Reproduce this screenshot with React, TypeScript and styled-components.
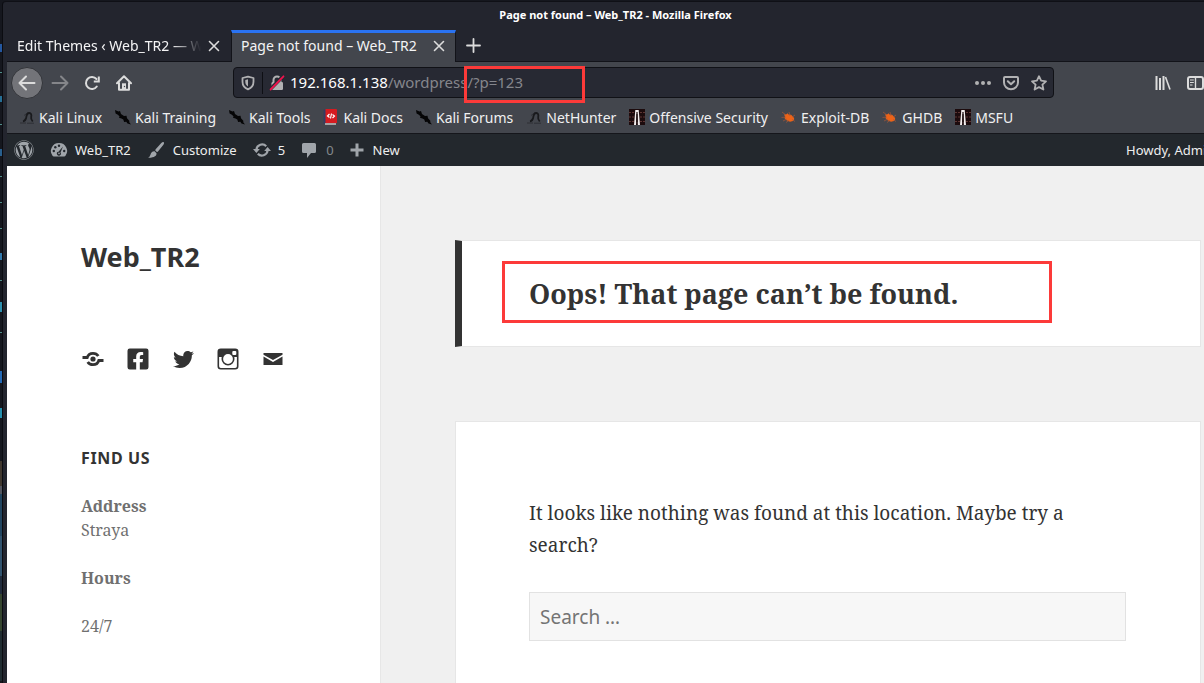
import React from "react";
import styled, { createGlobalStyle } from "styled-components";
import { FaFacebookSquare, FaTwitter, FaWordpress } from "react-icons/fa";

const sans = `"Noto Sans", "Open Sans", sans-serif`;
const serif = `"Noto Serif", "DejaVu Serif Condensed", "DejaVu Serif", serif`;

const GlobalStyle = createGlobalStyle`
  * { box-sizing: border-box; }
  body { margin: 0; background: #1a1c24; font-family: ${sans}; overflow: hidden; }
  button, input { font: inherit; color: inherit; margin: 0; padding: 0; border: 0; background: none; }
  a { color: inherit; text-decoration: none; }
  h1, h2, p { margin: 0; }
  svg { display: block; flex: none; }
`;

const Desktop = styled.div`
  display: flex;
  height: 100vh;
  padding-top: 1px;
  overflow: hidden;
  background: #15171e;
`;

const DesktopEdge = styled.svg`
  width: 2px;
  height: 100%;
`;

const Window = styled.div`
  flex: 1;
  min-width: 0;
  display: flex;
  flex-direction: column;
  padding-left: 4px;
  border-left: 1px solid #0b0c11;
  border-top: 1px solid #0f1016;
  border-top-left-radius: 4px;
  background: #23252e;
`;

const TitleBar = styled.header`
  height: 28px;
  line-height: 26px;
  text-align: center;
  font-size: 11px;
  font-weight: 700;
  color: #fff;
  padding-left: 20px;
`;

const TabStrip = styled.nav`
  height: 32px;
  display: flex;
  align-items: stretch;
  border-bottom: 1px solid #121319;
`;

const Tab = styled.div<{ $active?: boolean }>`
  width: ${(p) => (p.$active ? 225 : 224)}px;
  height: ${(p) => (p.$active ? "32px" : "31px")};
  display: flex;
  align-items: center;
  padding: 0 7px 3px 9px;
  font-size: 14px;
  color: #f4f4f5;
  border-top: 3px solid ${(p) => (p.$active ? "#2a73f2" : "transparent")};
  border-left: 1px solid ${(p) => (p.$active ? "#121319" : "transparent")};
  border-right: 1px solid ${(p) => (p.$active ? "#121319" : "transparent")};
  background: ${(p) => (p.$active ? "#43464d" : "transparent")};
`;

const TabTitle = styled.span<{ $fade?: boolean }>`
  flex: 1;
  min-width: 0;
  overflow: hidden;
  white-space: nowrap;
  line-height: 24px;
  ${(p) => p.$fade && "mask-image: linear-gradient(to right, #000 82%, transparent 98%);"}
`;

const tones = { bright: "#dcdcdc", soft: "#b1b1b3", off: "#85868a" };

const IconButton = styled.button<{ $width: number; $tone?: keyof typeof tones }>`
  && { color: ${(p) => tones[p.$tone ?? "bright"]}; }
  width: ${(p) => p.$width}px;
  height: 30px;
  display: flex;
  align-items: center;
  justify-content: center;
  flex: none;
`;

const BackButton = styled(IconButton)`
  && {
    height: 32px;
    border-radius: 50%;
    border: 1px solid #33353a;
    background: #737479;
  }
`;

const TabButton = styled(IconButton)`
  height: 28px;
`;

const NavBar = styled.div`
  height: 41px;
  display: flex;
  align-items: center;
  padding-left: 4px;
  background: #43464d;
`;

const UrlBar = styled.div`
  flex: 1;
  height: 31px;
  display: flex;
  align-items: center;
  margin: 0 101px 0 92px;
  padding: 0 0 0 7px;
  border: 1px solid #101116;
  border-radius: 4px;
  background: #272933;
  color: #b1b1b3;
`;

const Divider = styled.span`
  width: 1px;
  height: 22px;
  margin: 0 6px 0 7px;
  background: #0e0f14;
`;

const Address = styled.div`
  flex: 1;
  padding-left: 5px;
  font-size: 15px;
  line-height: 29px;
  white-space: nowrap;
  color: #85868c;
  b { font-weight: 400; color: #fff; }
`;

const Query = styled.span`
  position: relative;
`;

const QueryMark = styled.span`
  position: absolute;
  left: -3px;
  top: -6px;
  width: 121px;
  height: 37px;
  border: 3px solid #fc3a39;
`;

const Clip = styled.div`
  width: 17px;
  margin-left: 16px;
  overflow: hidden;
  flex: none;
`;

const Bookmarks = styled.nav`
  height: 31px;
  display: flex;
  align-items: center;
  gap: 13px;
  padding: 0 0 2px 12px;
  font-size: 14px;
  white-space: nowrap;
  color: #f0f0f1;
  background: #43464d;
  border-bottom: 1px solid #15161b;
`;

const Bookmark = styled.a`
  display: flex;
  align-items: center;
  gap: 4px;
`;

const AdminBar = styled.nav`
  height: 32px;
  display: flex;
  align-items: center;
  padding-left: 7px;
  font-size: 13px;
  white-space: nowrap;
  color: #eee;
  background: #23282d;
`;

const AdminItem = styled.a<{ $gap?: number; $dim?: boolean }>`
  display: flex;
  align-items: center;
  gap: ${(p) => p.$gap ?? 7}px;
  margin-right: 16px;
  color: ${(p) => (p.$dim ? "#84888c" : "#eee")};
  svg { color: #a0a5aa; }
`;

const Howdy = styled.a`
  width: 78px;
  margin-left: auto;
  overflow: hidden;
`;

const Site = styled.div`
  flex: 1;
  min-height: 0;
  display: flex;
  background: #f0f0f0;
`;

const Sidebar = styled.aside`
  width: 374px;
  flex: none;
  padding: 74px 74px 0;
  background: #fff;
  border-right: 1px solid #e7e7e7;
  color: #333;
`;

const SiteTitle = styled.h1`
  font-size: 27px;
  line-height: 34px;
`;

const Social = styled.nav`
  display: flex;
  gap: 21px;
  margin-top: 73px;
  a {
    width: 24px;
    height: 24px;
    display: flex;
    align-items: center;
    justify-content: center;
  }
`;

const WidgetTitle = styled.h2`
  margin-top: 75px;
  font-size: 16px;
  line-height: 24px;
  letter-spacing: 0.04em;
  text-transform: uppercase;
`;

const WidgetText = styled.p`
  margin-top: 24px;
  font-family: ${serif};
  font-size: 16px;
  line-height: 24px;
  color: #707070;
`;

const Main = styled.main`
  flex: 1;
  min-width: 0;
  display: flex;
  flex-direction: column;
  gap: 74px;
  padding: 74px 3px 0 74px;
`;

const NoticeCard = styled.header`
  position: relative;
  padding: 37px 67px 36px;
  background: #fff;
  border: 1px solid #e6e6e6;
  border-left: 7px solid #333;
`;

const NoticeTitle = styled.h1`
  font-family: ${serif};
  font-size: 27px;
  line-height: 32px;
  color: #333;
`;

const NoticeMark = styled.span`
  position: absolute;
  left: 40px;
  top: 20px;
  width: 550px;
  height: 62px;
  border: 3px solid #fc3a39;
`;

const ContentCard = styled.section`
  flex: 1;
  padding: 75px 74px 0 73px;
  background: #fff;
  border: 1px solid #e6e6e6;
  border-bottom: 0;
`;

const Message = styled.p`
  font-family: ${serif};
  font-size: 19px;
  line-height: 32px;
  color: #333;
`;

const SearchInput = styled.input`
  && {
    display: block;
    width: 100%;
    height: 49px;
    margin-top: 31px;
    padding: 0 10px;
    border: 1px solid #e2e2e2;
    background: #f7f7f7;
    font-size: 19px;
  }
  &::placeholder { color: #747474; opacity: 1; }
`;

const Close = () => (
  <svg width="12" height="12" viewBox="0 0 12 12" stroke="currentColor" strokeWidth="1.6" strokeLinecap="round">
    <path d="M1.5 1.5l9 9M10.5 1.5l-9 9" />
  </svg>
);
const Plus = () => (
  <svg width="15" height="15" viewBox="0 0 15 15" stroke="currentColor" strokeWidth="1.8" strokeLinecap="round">
    <path d="M7.5 1v13M1 7.5h13" />
  </svg>
);
const Arrow = ({ forward }: { forward?: boolean }) => (
  <svg width="18" height="16" viewBox="0 0 18 16" fill="none" stroke="currentColor" strokeWidth="2" strokeLinecap="round" strokeLinejoin="round">
    <path d={forward ? "M1.500 8h15M10 1.500l6.500 6.500l-6.500 6.500" : "M16.500 8h-15M8 1.500l-6.500 6.500l6.500 6.500"} />
  </svg>
);
const Reload = () => (
  <svg width="16" height="16" viewBox="0 0 16 16" fill="none" stroke="currentColor" strokeWidth="2" strokeLinecap="round">
    <path d="M12.800 11.500A6 6 0 1 1 12.500 4" />
    <path d="M14.800 1.500v5H9.800" strokeWidth="2" strokeLinecap="butt" />
  </svg>
);
const Home = () => (
  <svg width="16" height="16" viewBox="0 0 16 16" fill="none" stroke="currentColor" strokeWidth="2" strokeLinecap="round" strokeLinejoin="round">
    <path d="M1 8.300L8 1.300l7 7M3 8v6.800h10V8" />
    <path d="M6 15V8.300h4V15z" fill="currentColor" stroke="none" />
    <circle cx="8.500" cy="11.500" r=".7" fill="#43464d" stroke="none" />
  </svg>
);
const Shield = () => (
  <svg width="14" height="16" viewBox="0 0 14 16" fill="none" stroke="currentColor" strokeWidth="1.800" strokeLinejoin="round">
    <path d="M7 1.600L12.500 3v3.800c0 3.800-2.200 6.300-5.500 7.600C3.700 13.100 1.500 10.600 1.500 6.800V3z" />
    <path d="M7 4.300v7.200C5.200 10.300 4.300 8.800 4.300 6.700V5z" fill="currentColor" stroke="none" />
  </svg>
);
const Unlocked = () => (
  <svg width="16" height="16" viewBox="0 0 16 16" fill="none">
    <path d="M4.500 8V5a3.500 3.500 0 0 1 7 0v3" stroke="#b1b1b3" strokeWidth="2" />
    <rect x="2.500" y="7" width="11.500" height="8" rx="1.200" fill="#b1b1b3" />
    <path d="M1.200 14.300L14.200 1" stroke="#272933" strokeWidth="3.600" />
    <path d="M1.600 14.500L14.500 1.300" stroke="#f0134d" strokeWidth="1.800" strokeLinecap="round" />
  </svg>
);
const Dots = () => (
  <svg width="16" height="16" viewBox="0 0 16 16" fill="currentColor">
    <circle cx="2" cy="8" r="2" /><circle cx="8" cy="8" r="2" /><circle cx="14" cy="8" r="2" />
  </svg>
);
const Pocket = () => (
  <svg width="16" height="16" viewBox="0 0 16 16" fill="none" stroke="currentColor" strokeWidth="2" strokeLinecap="round" strokeLinejoin="round">
    <path d="M2 2h12a1 1 0 0 1 1 1v4.500a7 6.700 0 0 1-14 0V3a1 1 0 0 1 1-1z" />
    <path d="M4.800 6.300L8 9.300l3.200-3" />
  </svg>
);
const Star = () => (
  <svg width="16" height="16" viewBox="0 0 16 16" fill="none" stroke="currentColor" strokeWidth="1.800" strokeLinejoin="round">
    <path d="M8 1.200l2.100 4.500 4.900.6-3.600 3.300 1 4.900L8 12.100l-4.400 2.400 1-4.900L1 6.300l4.900-.6z" />
  </svg>
);
const Library = () => (
  <svg width="16" height="16" viewBox="0 0 16 16" stroke="currentColor" strokeWidth="2">
    <path d="M1.500 1v14M5 3v12M8.500 1v14" />
    <path d="M10.500 2l4.500 12.500" strokeWidth="1.600" />
  </svg>
);
const SidebarIcon = () => (
  <svg width="18" height="16" viewBox="0 0 18 16" fill="none" stroke="currentColor" strokeWidth="2">
    <rect x="1" y="2" width="15" height="12" rx="2" />
    <path d="M8.500 2v12" strokeWidth="1.400" />
    <path d="M3 5h3.800M3 7.500h3.800M3 10h2.500" strokeWidth="1.200" />
  </svg>
);

const KaliDragon = () => (
  <svg width="16" height="16" viewBox="0 0 16 16" fill="none" stroke="#191a1d">
    <path d="M4 12.500c2-.5 2.800-2 3.200-4 .4-2.500 1.300-4.500 3-4.500 1.900 0 2.500 1.800 2 3.800-.4 1.600 0 3 1.500 4.700" strokeWidth="1.800" />
    <path d="M5 6.500l4-3M1 14h6M8 14.200h7" strokeWidth="1" opacity=".5" />
  </svg>
);
const KaliBlade = () => (
  <svg width="16" height="16" viewBox="0 0 16 16">
    <path d="M0 1L3.500 2.500 5 2l1 3 3 2 2.500-.3.500 2.500L14.500 12l-.4 1L16 15.500l-3.500-1-1.200-1.800-2.200.2-.8-2.400L6.500 9.500 4 8.800l.5-1.500L2.500 5.500 .6 4.500z" fill="#050506" />
  </svg>
);
const KaliDocs = () => (
  <svg width="16" height="16" viewBox="0 0 16 16">
    <path d="M2 0h11a1 1 0 0 1 1 1v13H2z" fill="#d51b20" />
    <path d="M0.500 1L2.500 0v14l-2 1z" fill="#343d63" />
    <path d="M2 15h11" stroke="#e9e2df" strokeWidth="1.200" />
    <path d="M6.500 5L4.500 7l2 1.500M9.500 5.500l2 1.500-2 2M8.500 4.500L7.500 9.500" stroke="#fff" strokeWidth="1.200" fill="none" />
  </svg>
);
const OffSec = () => (
  <svg width="16" height="16" viewBox="0 0 16 16">
    <rect width="16" height="16" fill="#1c0b0d" />
    <path d="M0 3.500h5M0 8h5M0 12.500h5M11 3.500h5M11 8h5M11 12.500h5" stroke="#5d3533" strokeWidth="1" strokeDasharray="2 1" />
    <path d="M5 16L6.300 1h3.400L11 16H8.900L8.500 5h-1L7 16z" fill="#f4eeee" />
    <path d="M8 3v10" stroke="#150809" strokeWidth="1.200" />
  </svg>
);
const Exploit = () => (
  <svg width="16" height="16" viewBox="0 0 16 16">
    <path d="M3 5.500l2.500-.2 1-1 1 1.200 2.500.2 2.300 2 1 2.300-1.300 2-3 .800-3.500-1.600L3.500 9l.5-1.500z" fill="#ec6318" />
    <path d="M1 3l4 3M.500 8.500L5 8M2 12l4-2M8 3l1 4M14 6l-3 2M14 12.500l-3-2M5 13.500l3-2" stroke="#a5573a" strokeWidth=".7" fill="none" />
  </svg>
);

const Dashboard = () => (
  <svg width="18" height="18" viewBox="0 0 18 18">
    <path d="M9 2a8 8 0 0 0-6.500 12.800c.3.500.7.700 1.200.700h10.600c.5 0 .9-.2 1.200-.700A8 8 0 0 0 9 2z" fill="currentColor" />
    <g fill="#23282d">
      <circle cx="9" cy="4.800" r="1.200" /><circle cx="5.300" cy="6.300" r="1.200" /><circle cx="3.800" cy="10" r="1.200" /><circle cx="14.200" cy="10" r="1.200" />
      <path d="M13 5.500l-2.500 6a2 2 0 1 1-2-.800z" />
    </g>
    <circle cx="9" cy="12.400" r=".8" fill="currentColor" />
  </svg>
);
const Brush = () => (
  <svg width="18" height="18" viewBox="0 0 18 18" fill="currentColor">
    <path d="M16.700 1.200c.7.600.3 1.600-.5 2.700L11 10.500c-.4.500-1 .6-1.400.200l-1-1c-.5-.5-.4-1 .1-1.500L14.300 2c1-.9 1.800-1.300 2.400-.800zM7.600 10.300l1.900 1.900c.3 2.300-2 4.700-8.500 4.500 2.300-.9 2-2.600 3-4.500.8-1.400 2.200-2.200 3.600-1.900z" />
  </svg>
);
const Updates = () => (
  <svg width="18" height="18" viewBox="0 0 18 18" fill="none" stroke="currentColor" strokeWidth="2.200">
    <path d="M3.400 8.500A5.700 5.700 0 0 1 13.200 5.200M14.600 9.500A5.700 5.700 0 0 1 4.800 12.800" />
    <path d="M0 8h6.800L3.400 12zM11.200 10H18L14.600 6z" fill="currentColor" stroke="none" />
  </svg>
);
const Comment = () => (
  <svg width="16" height="18" viewBox="0 0 16 18" fill="currentColor">
    <path d="M2.500 2h11A1.500 1.500 0 0 1 15 3.500v7a1.500 1.500 0 0 1-1.500 1.500H10L6 17v-5H2.500A1.500 1.500 0 0 1 1 10.500v-7A1.500 1.500 0 0 1 2.500 2z" />
  </svg>
);
const AdminPlus = () => (
  <svg width="14" height="14" viewBox="0 0 14 14" fill="currentColor">
    <path d="M5.500 0.500h3v5h5v3h-5v5h-3v-5h-5v-3h5z" />
  </svg>
);

const Connect = () => (
  <svg width="24" height="24" viewBox="0 0 24 24" fill="none" stroke="currentColor" strokeWidth="2.800">
    <path d="M1.500 10.500h4.700C7 8 9.300 6.300 12 6.300c2.300 0 4.200 1 5.300 2.700M22.500 13.500h-4.700C17 16 14.700 17.700 12 17.700c-2.300 0-4.200-1-5.300-2.700" />
    <circle cx="12" cy="12" r="2.600" fill="currentColor" stroke="none" />
  </svg>
);
const Instagram = () => (
  <svg width="24" height="24" viewBox="0 0 24 24">
    <rect x="2.300" y="2.300" width="19.400" height="19.400" rx="2.500" fill="#fff" stroke="currentColor" strokeWidth="1.600" />
    <path d="M2.500 10V4.500a2 2 0 0 1 2-2h15a2 2 0 0 1 2 2V10z" fill="currentColor" />
    <circle cx="12" cy="12" r="5.700" fill="#fff" stroke="currentColor" strokeWidth="1.600" />
    <rect x="16.300" y="4" width="4" height="4" rx="1" fill="#fff" />
  </svg>
);
const Mail = () => (
  <svg width="24" height="24" viewBox="0 0 24 24" fill="currentColor">
    <path d="M2.500 6h19v1.800l-9.500 5.200-9.500-5.200zM2.500 9.600l9.500 5.300 9.500-5.300V18h-19z" />
  </svg>
);

const bookmarks: [string, React.FC][] = [
  ["Kali Linux", KaliDragon],
  ["Kali Training", KaliBlade],
  ["Kali Tools", KaliBlade],
  ["Kali Docs", KaliDocs],
  ["Kali Forums", KaliBlade],
  ["NetHunter", KaliDragon],
  ["Offensive Security", OffSec],
  ["Exploit-DB", Exploit],
  ["GHDB", Exploit],
  ["MSFU", OffSec],
];

/* Slivers of the terminal and wallpaper behind the window: [y, height, colour] */
const slivers: [number, number, string][] = [
  [43, 8, "#2457a0"], [71, 1, "#51908c"], [95, 6, "#266f96"], [123, 1, "#51908c"], [148, 7, "#285f8e"],
  [175, 1, "#51908c"], [201, 1, "#51908c"], [227, 1, "#51908c"], [252, 7, "#3179ad"], [279, 1, "#51908c"],
  [301, 10, "#2d8fae"], [331, 1, "#51908c"], [370, 12, "#2369b5"], [407, 10, "#258fae"],
  [460, 25, "#40382f"], [485, 8, "#535660"], [493, 42, "#214560"], [535, 40, "#31536e"],
  [575, 18, "#202b3c"], [593, 37, "#35452f"], [630, 50, "#202c31"],
];

export default function App() {
  return (
    <>
      <GlobalStyle />
      <Desktop>
        <DesktopEdge aria-hidden="true">
          {slivers.map(([y, h, c]) => (
            <rect key={y} y={y} width="2" height={h} fill={c} />
          ))}
        </DesktopEdge>
        <Window>
          <TitleBar>Page not found – Web_TR2 - Mozilla Firefox</TitleBar>
          <TabStrip>
            <Tab>
              <TabTitle $fade>Edit Themes ‹ Web_TR2 — W</TabTitle>
              <TabButton $width={18} aria-label="Close tab"><Close /></TabButton>
            </Tab>
            <Tab $active>
              <TabTitle>Page not found – Web_TR2</TabTitle>
              <TabButton $width={18} aria-label="Close tab"><Close /></TabButton>
            </Tab>
            <IconButton $width={34} aria-label="New tab"><Plus /></IconButton>
          </TabStrip>
          <NavBar>
            <BackButton $width={32} aria-label="Back"><Arrow /></BackButton>
            <IconButton $width={34} $tone="off" aria-label="Forward"><Arrow forward /></IconButton>
            <IconButton $width={30} aria-label="Reload"><Reload /></IconButton>
            <IconButton $width={34} aria-label="Home"><Home /></IconButton>
            <UrlBar>
              <Shield />
              <Divider />
              <Unlocked />
              <Address>
                <b>192.168.1.138</b>/wordpress<Query>/?p=123<QueryMark /></Query>
              </Address>
              <IconButton $width={28} $tone="soft" aria-label="Page actions"><Dots /></IconButton>
              <IconButton $width={28} $tone="soft" aria-label="Save to Pocket"><Pocket /></IconButton>
              <IconButton $width={28} $tone="soft" aria-label="Bookmark this page"><Star /></IconButton>
            </UrlBar>
            <IconButton $width={16} aria-label="Library"><Library /></IconButton>
            <Clip><IconButton $width={18} aria-label="Sidebars"><SidebarIcon /></IconButton></Clip>
          </NavBar>
          <Bookmarks>
            {bookmarks.map(([name, Icon]) => (
              <Bookmark href="#" key={name}><Icon />{name}</Bookmark>
            ))}
          </Bookmarks>
          <AdminBar>
            <AdminItem href="#" aria-label="About WordPress"><FaWordpress size={20} /></AdminItem>
            <AdminItem href="#"><Dashboard />Web_TR2</AdminItem>
            <AdminItem href="#" $gap={8}><Brush />Customize</AdminItem>
            <AdminItem href="#"><Updates />5</AdminItem>
            <AdminItem href="#" $dim $gap={9}><Comment />0</AdminItem>
            <AdminItem href="#" $gap={9}><AdminPlus />New</AdminItem>
            <Howdy href="#">Howdy, Admi</Howdy>
          </AdminBar>
          <Site>
            <Sidebar>
              <SiteTitle><a href="#">Web_TR2</a></SiteTitle>
              <Social>
                <a href="#" aria-label="Connect"><Connect /></a>
                <a href="#" aria-label="Facebook"><FaFacebookSquare size={24} /></a>
                <a href="#" aria-label="Twitter"><FaTwitter size={21} /></a>
                <a href="#" aria-label="Instagram"><Instagram /></a>
                <a href="#" aria-label="Email"><Mail /></a>
              </Social>
              <WidgetTitle>Find Us</WidgetTitle>
              <WidgetText><strong>Address</strong><br />Straya</WidgetText>
              <WidgetText><strong>Hours</strong></WidgetText>
              <WidgetText>24/7</WidgetText>
            </Sidebar>
            <Main>
              <NoticeCard>
                <NoticeTitle>Oops! That page can’t be found.</NoticeTitle>
                <NoticeMark />
              </NoticeCard>
              <ContentCard>
                <Message>It looks like nothing was found at this location. Maybe try a search?</Message>
                <SearchInput type="search" aria-label="Search for" placeholder="Search …" />
              </ContentCard>
            </Main>
          </Site>
        </Window>
      </Desktop>
    </>
  );
}
